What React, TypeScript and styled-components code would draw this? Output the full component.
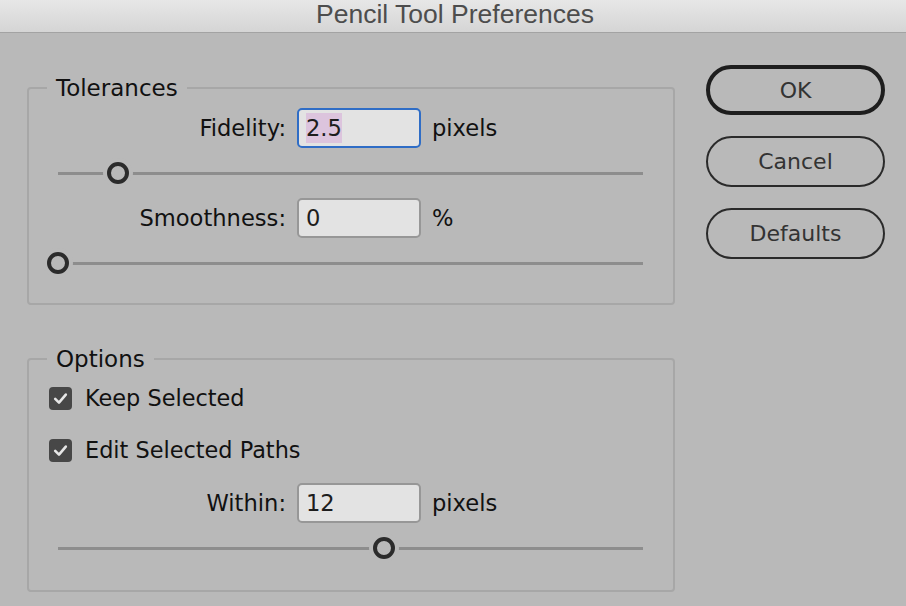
import React from 'react';
import styled, { createGlobalStyle } from 'styled-components';

const GlobalStyle = createGlobalStyle`
    html, body {
        margin: 0;
        padding: 0;
        background: #b9b9b9;
    }
    body {
        width: 906px;
        height: 606px;
        overflow: hidden;
        font-family: 'DejaVu Sans', 'Liberation Sans', sans-serif;
        color: #111;
    }
`;

type SliderProps = { value: number };

const Slider = ({ value }: SliderProps) => (
    <StyledSliderRow>
        <StyledTrack>
            <StyledThumb style={{ left: `${value * 100}%` }} />
        </StyledTrack>
    </StyledSliderRow>
);

type FieldRowProps = {
    label: string;
    value: string;
    unit: string;
    focused?: boolean;
};

const FieldRow = ({ label, value, unit, focused }: FieldRowProps) => (
    <StyledFieldRow>
        <StyledLabel>{label}</StyledLabel>
        <StyledField $focused={focused}>
            {focused ? <StyledSelection>{value}</StyledSelection> : value}
        </StyledField>
        <StyledUnit>{unit}</StyledUnit>
    </StyledFieldRow>
);

const Check = ({ label }: { label: string }) => (
    <StyledCheckRow>
        <StyledCheckBox>
            <svg width="23" height="23" viewBox="0 0 23 23">
                <path
                    d="M6.2 11.8 L10 15.6 L16.8 7.6"
                    fill="none"
                    stroke="#e6e6e6"
                    strokeWidth="2.6"
                    strokeLinecap="round"
                    strokeLinejoin="round"
                />
            </svg>
        </StyledCheckBox>
        <span>{label}</span>
    </StyledCheckRow>
);

export default function App() {
    return (
        <>
            <GlobalStyle />
            <StyledWindow>
                <StyledTitleBar>Pencil Tool Preferences</StyledTitleBar>
                <StyledBody>
                    <StyledGroups>
                        <StyledGroup>
                            <StyledLegend>Tolerances</StyledLegend>
                            <StyledGroupContent $top={7} $bottom={15}>
                                <FieldRow label="Fidelity:" value="2.5" unit="pixels" focused />
                                <Slider value={0.1026} />
                                <FieldRow label="Smoothness:" value="0" unit="%" />
                                <Slider value={0} />
                            </StyledGroupContent>
                        </StyledGroup>
                        <StyledGroup>
                            <StyledLegend>Options</StyledLegend>
                            <StyledGroupContent $top={6} $bottom={17}>
                                <Check label="Keep Selected" />
                                <Check label="Edit Selected Paths" />
                                <StyledSpacer />
                                <FieldRow label="Within:" value="12" unit="pixels" />
                                <Slider value={0.557} />
                            </StyledGroupContent>
                        </StyledGroup>
                    </StyledGroups>
                    <StyledButtons>
                        <StyledButton $primary>OK</StyledButton>
                        <StyledButton>Cancel</StyledButton>
                        <StyledButton>Defaults</StyledButton>
                    </StyledButtons>
                </StyledBody>
            </StyledWindow>
        </>
    );
}

const StyledWindow = styled.div`
    width: 906px;
    height: 606px;
    background: #b9b9b9;
`;

const StyledTitleBar = styled.div`
    box-sizing: border-box;
    height: 33px;
    border-bottom: 1px solid #a3a3a3;
    background: linear-gradient(#e7e7e7, #d5d5d5);
    display: flex;
    align-items: center;
    justify-content: center;
    padding: 0 0 4px 4px;
    font-family: 'Liberation Sans', Arial, sans-serif;
    font-size: 26.5px;
    line-height: 29px;
    color: #4d4d4d;
`;

const StyledBody = styled.div`
    display: flex;
    align-items: flex-start;
    padding: 32px 0 0 27px;
    gap: 31px;
`;

const StyledGroups = styled.div`
    width: 648px;
    display: flex;
    flex-direction: column;
    gap: 41px;
    margin-top: 10px;
`;

const StyledGroup = styled.fieldset`
    margin: 0;
    padding: 0;
    border: 2px solid #a7a7a7;
    border-radius: 4px;
    min-width: 0;
`;

const StyledLegend = styled.legend`
    margin-left: 18px;
    padding: 0 9px;
    font-size: 23px;
    line-height: 26px;
    color: #111;
`;

const StyledGroupContent = styled.div<{ $top: number; $bottom: number }>`
    display: flex;
    flex-direction: column;
    padding-top: ${(p) => p.$top}px;
    padding-bottom: ${(p) => p.$bottom}px;
`;

const StyledFieldRow = styled.div`
    display: flex;
    align-items: center;
    height: 40px;
    font-size: 22.6px;
`;

const StyledLabel = styled.div`
    width: 257px;
    text-align: right;
    margin-right: 11px;
    color: #111;
`;

const StyledField = styled.div<{ $focused?: boolean }>`
    box-sizing: border-box;
    width: 124px;
    height: 40px;
    border-radius: 5px;
    border: 2px solid ${(p) => (p.$focused ? '#2f6dc6' : '#979797')};
    background: #e3e3e3;
    padding-left: 7px;
    display: flex;
    align-items: center;
    color: #1d1d1d;
`;

const StyledSelection = styled.span`
    background: #dcc4dd;
    line-height: 30px;
`;

const StyledUnit = styled.div`
    margin-left: 11px;
    color: #111;
`;

const StyledSliderRow = styled.div`
    height: 50px;
    display: flex;
    align-items: center;
    padding: 0 30px 0 29px;
`;

const StyledTrack = styled.div`
    position: relative;
    flex: 1;
    height: 3px;
    background: #8d8d8d;
`;

const StyledThumb = styled.div`
    position: absolute;
    top: 50%;
    width: 22px;
    height: 22px;
    box-sizing: border-box;
    border-radius: 50%;
    border: 4px solid #2b2b2b;
    background: #b9b9b9;
    box-shadow: 0 0 0 4px #b9b9b9;
    transform: translate(-50%, -50%);
`;

const StyledCheckRow = styled.div`
    display: flex;
    align-items: center;
    gap: 13px;
    height: 40px;
    margin-bottom: 12px;
    padding-left: 20px;
    font-size: 22.4px;
    color: #111;
    &:last-of-type {
        margin-bottom: 0;
    }
`;

const StyledCheckBox = styled.div`
    width: 23px;
    height: 23px;
    border-radius: 4px;
    background: #474747;
    display: flex;
`;

const StyledSpacer = styled.div`
    height: 1px;
`;

const StyledButtons = styled.div`
    display: flex;
    flex-direction: column;
    gap: 21px;
`;

const StyledButton = styled.button<{ $primary?: boolean }>`
    box-sizing: border-box;
    width: 179px;
    height: ${(p) => (p.$primary ? 50 : 51)}px;
    border-radius: 26px;
    border: ${(p) => (p.$primary ? '4px solid #1e1e1e' : '2px solid #2a2a2a')};
    background: transparent;
    font-family: 'DejaVu Sans', 'Liberation Sans', sans-serif;
    font-size: 22px;
    color: #333;
    padding: 0;
`;
